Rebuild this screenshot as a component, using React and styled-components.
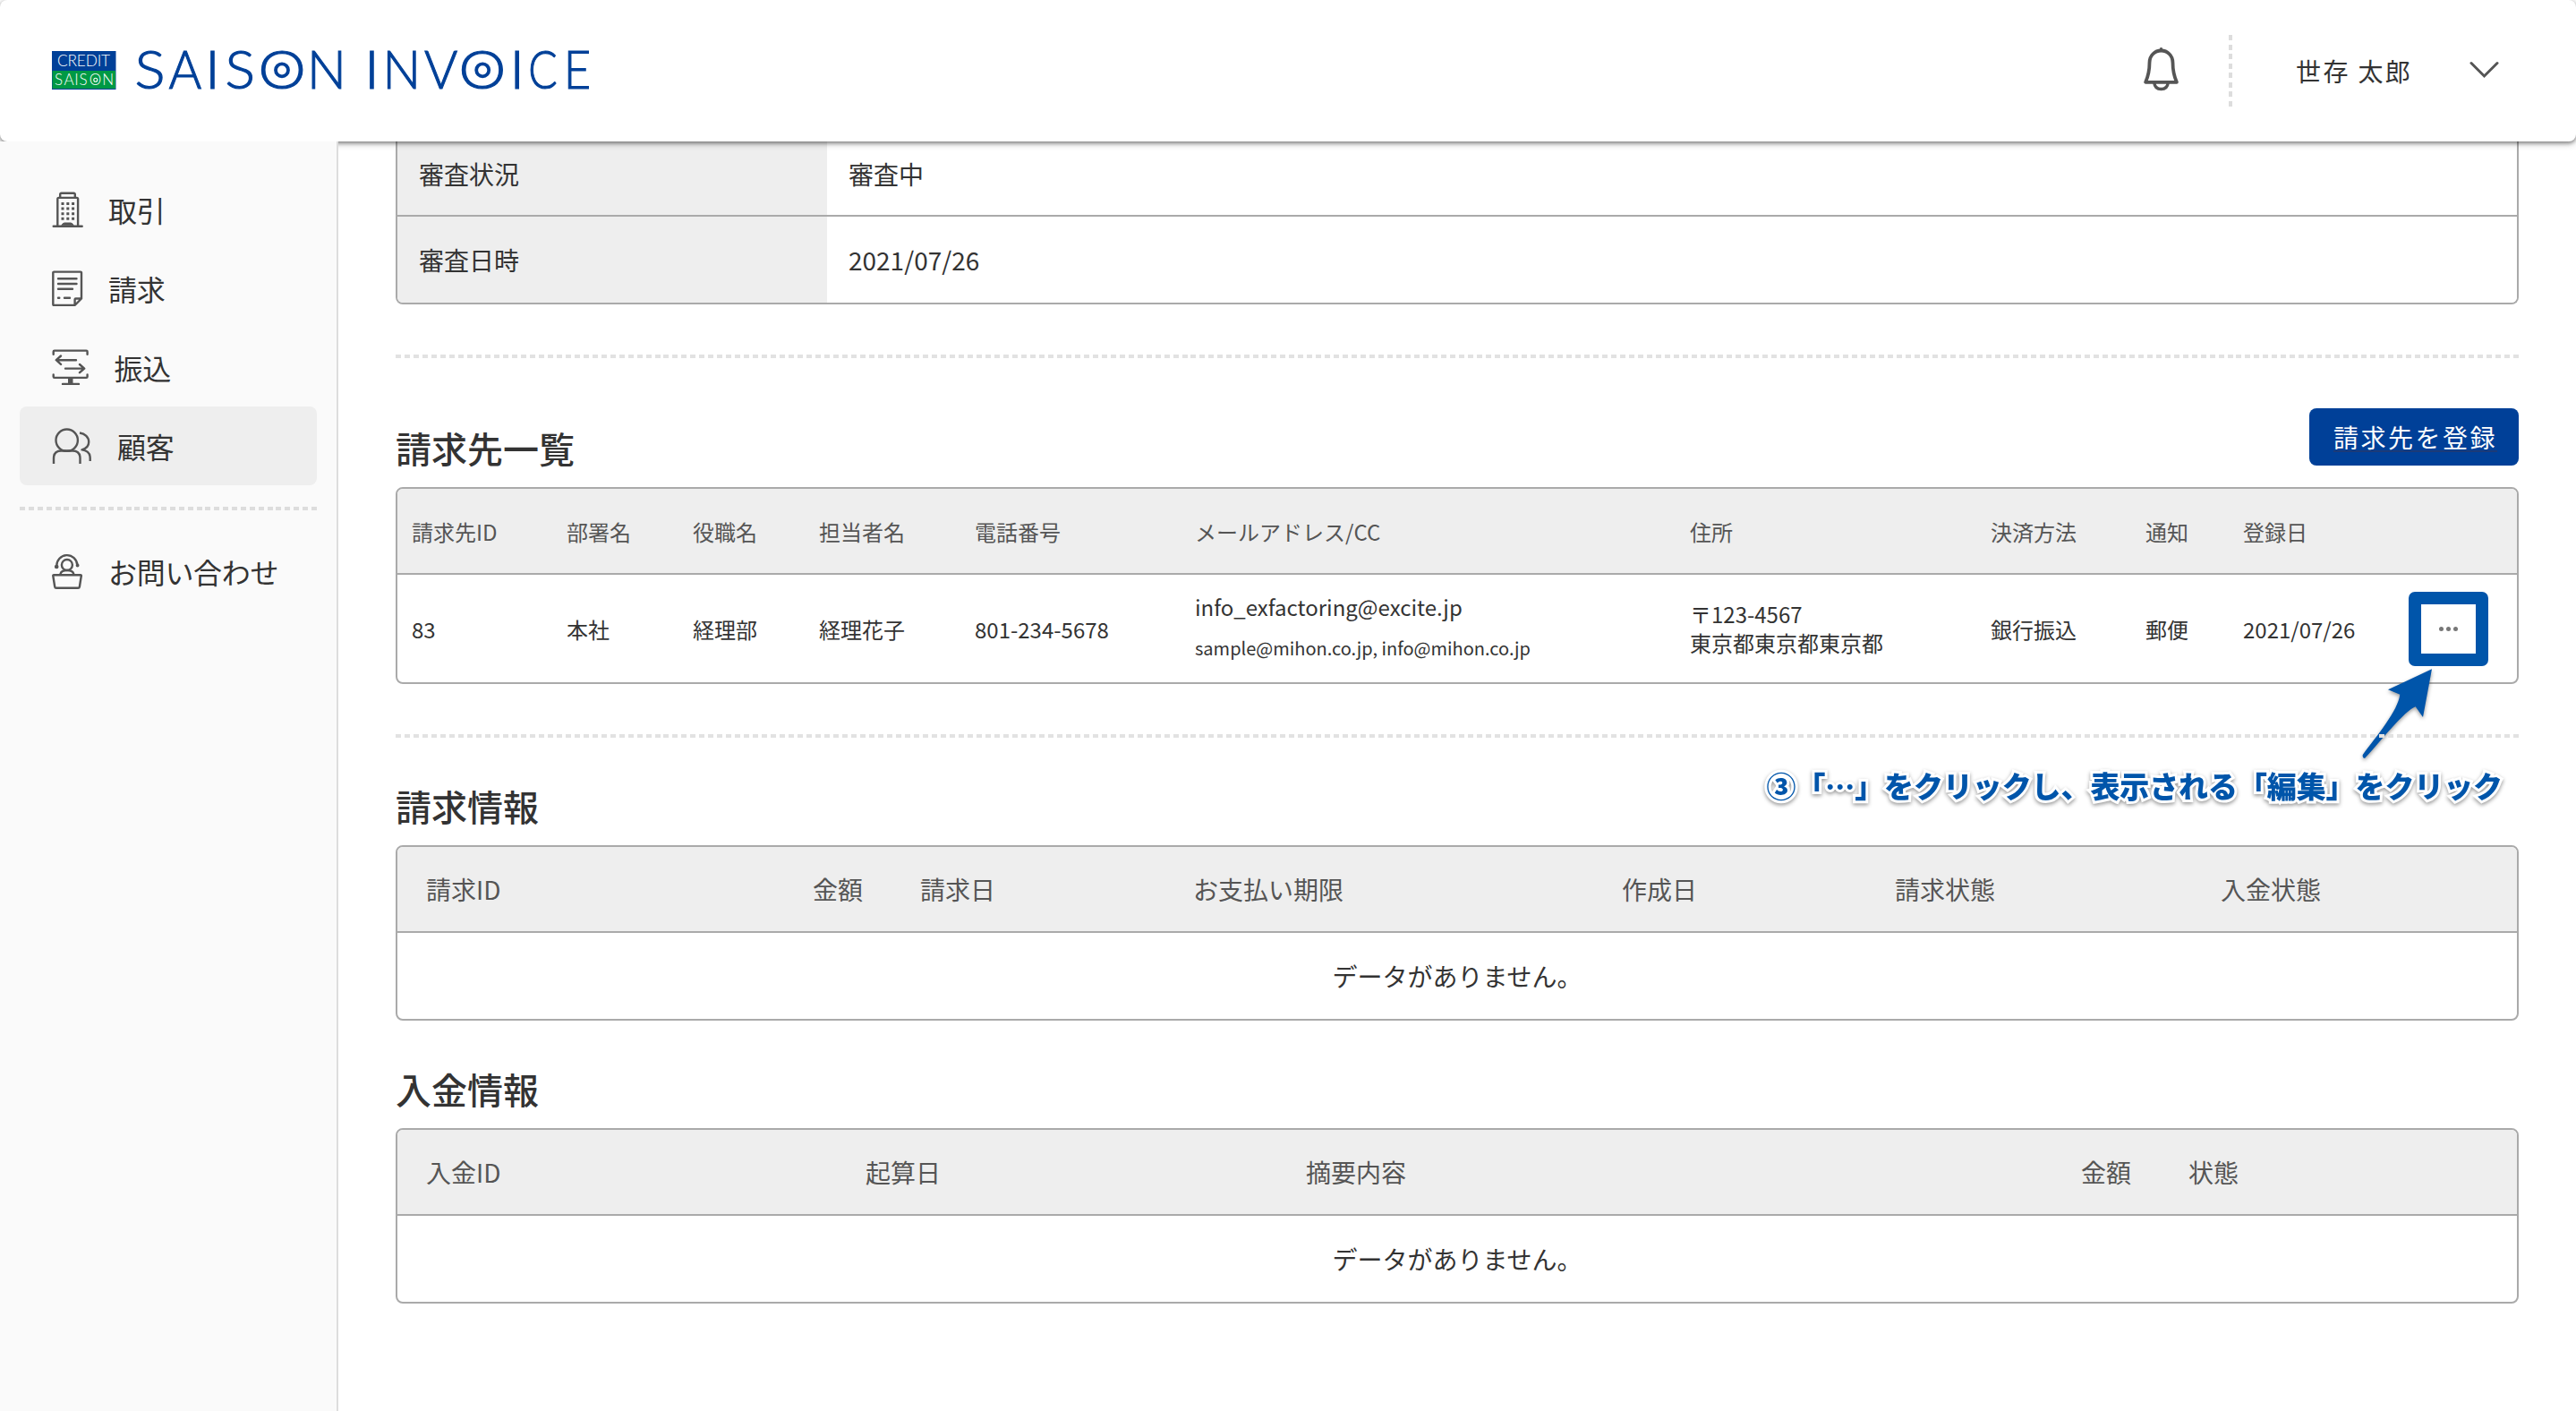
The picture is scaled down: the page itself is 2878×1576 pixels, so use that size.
import React from "react";
import styled, { createGlobalStyle } from "styled-components";

const GlobalStyle = createGlobalStyle`
  * { box-sizing: border-box; }
  html, body { margin: 0; padding: 0; background: #fff; }
  body {
    font-family: "Noto Sans CJK JP", "Noto Sans", sans-serif;
    color: #333;
    overflow: hidden;
  }
`;

const Page = styled.div`
  width: 2878px;
  height: 1576px;
  display: flex;
  flex-direction: column;
  overflow: hidden;
`;

const Header = styled.header`
  position: relative;
  z-index: 1;
  flex: none;
  height: 158px;
  padding: 0 86px 0 58px;
  display: flex;
  align-items: center;
  background: #fff;
  border-radius: 8px;
  box-shadow: 0 2px 4px rgba(0, 0, 0, 0.4), 0 2px 10px rgba(0, 0, 0, 0.22);
`;

const HeaderTools = styled.div`
  margin-left: auto;
  display: flex;
  align-items: center;
`;

const UserName = styled.span`
  width: 194px;
  margin-left: 71px;
  font-size: 28px;
  line-height: 40px;
  letter-spacing: 2.4px;
`;

const VerticalDash = styled.div`
  width: 4px;
  height: 80px;
  margin-left: 55px;
  background: repeating-linear-gradient(180deg, #ddd 0 6px, transparent 6px 10.571px);
`;

const HorizontalDash = styled.hr`
  width: 100%;
  height: 4px;
  margin: 0;
  border: 0;
  flex: none;
  background: repeating-linear-gradient(
    90deg,
    ${(p) => p.$color} 0 6px,
    transparent 6px ${(p) => p.$period}px
  );
`;

const Body = styled.div`
  flex: 1;
  min-height: 0;
  display: flex;
`;

const Sidebar = styled.nav`
  position: relative;
  z-index: 2;
  flex: none;
  width: 378px;
  padding: 32px 22px 0;
  background: #fafafa;
  border-right: 2px solid #ddd;
  display: flex;
  flex-direction: column;
`;

const NavGroup = styled.div`
  display: flex;
  flex-direction: column;
  padding: ${(p) => p.$pad || "0"};
`;

const NavItem = styled.a`
  height: 88px;
  padding-left: 36px;
  display: flex;
  align-items: center;
  gap: 28px;
  border-radius: 8px;
  background: ${(p) => (p.$active ? "#eee" : "transparent")};
  font-size: 32px;
  line-height: 48px;
  letter-spacing: -0.3px;
`;

const Main = styled.main`
  flex: 1;
  min-width: 0;
  padding: 0 64px;
  display: flex;
  flex-direction: column;
`;

const DetailTable = styled.div`
  display: grid;
  grid-template-rows: 82px 98px;
  border: 2px solid #aaa;
  border-top: 0;
  border-radius: 0 0 8px 8px;
  overflow: hidden;
  margin-bottom: 56px;
`;

const DetailRow = styled.div`
  display: grid;
  grid-template-columns: 480px 1fr;
  font-size: 28px;
  line-height: 42px;
  & + & { border-top: 2px solid #aaa; }
`;

const DetailCell = styled.div`
  display: flex;
  align-items: ${(p) => (p.$cut ? "flex-end" : "center")};
  padding: 0 24px ${(p) => (p.$cut ? "25px" : "0")};
  background: ${(p) => (p.$label ? "#eee" : "#fff")};
`;

const Section = styled.section`
  position: relative;
  padding-top: ${(p) => p.$top}px;
`;

const SectionHead = styled.div`
  display: flex;
  justify-content: space-between;
  align-items: flex-start;
  height: ${(p) => p.$height}px;
`;

const Title = styled.h2`
  margin: ${(p) => p.$offset || 0}px 0 0;
  font-size: 40px;
  line-height: 60px;
  font-weight: 500;
`;

const PrimaryButton = styled.a`
  width: 234px;
  height: 64px;
  display: flex;
  align-items: center;
  padding-left: 27px;
  border-radius: 8px;
  background: #004098;
  color: #fff;
  font-size: 28px;
  line-height: 42px;
  letter-spacing: 2.5px;
  white-space: nowrap;
  text-decoration: underline;
  text-decoration-color: #1b3a78;
  text-decoration-thickness: 2px;
  text-underline-offset: 3px;
`;

const Table = styled.div`
  border: 2px solid #aaa;
  border-radius: 8px;
  overflow: hidden;
  font-size: ${(p) => p.$size}px;
`;

const TableRow = styled.div`
  display: grid;
  grid-template-columns: ${(p) => p.$columns};
  align-items: center;
  height: ${(p) => p.$height}px;
  padding-left: ${(p) => p.$indent}px;
  white-space: nowrap;
`;

const TableHead = styled(TableRow)`
  background: #eee;
  color: #555;
  border-bottom: 2px solid #aaa;
`;

const Cell = styled.div`
  text-align: ${(p) => (p.$right ? "right" : "left")};
  padding-right: ${(p) => (p.$right ? 64 : 0)}px;
`;

const Stack = styled.div`
  display: flex;
  flex-direction: column;
`;

const Mail = styled.span`
  font-size: 24px;
  line-height: 43px;
`;

const MailCc = styled.span`
  font-size: 20px;
  line-height: 49px;
`;

const AddressLine = styled.span`
  line-height: 32px;
`;

const MoreButton = styled.div`
  display: flex;
  gap: 3px;
`;

const Dot = styled.i`
  width: 5px;
  height: 5px;
  border-radius: 50%;
  background: #777;
`;

const Empty = styled.div`
  height: 96px;
  display: flex;
  align-items: center;
  justify-content: center;
`;

const FocusFrame = styled.div`
  position: absolute;
  left: 2249px;
  top: 261px;
  width: 89px;
  height: 83px;
  border: 14px solid #0055aa;
  border-radius: 7px;
`;

const Arrow = styled.svg`
  position: absolute;
  left: 2188px;
  top: 340px;
  filter: drop-shadow(0 2px 2px rgba(0, 0, 0, 0.4));
`;

const Callout = styled.p`
  position: absolute;
  left: 1531.5px;
  top: 452px;
  margin: 0;
  font-size: 33px;
  line-height: 50px;
  font-weight: 900;
  letter-spacing: -0.1px;
  color: #0055aa;
  white-space: nowrap;
  -webkit-text-stroke: 6px #fff;
  paint-order: stroke fill;
  filter: drop-shadow(0 2px 2px rgba(0, 0, 0, 0.4));
`;

const LogoSvg = styled.svg`
  display: block;
  overflow: visible;
`;

const BellSvg = styled.svg`
  margin-bottom: 5px;
`;

const ChevronSvg = styled.svg`
  margin-bottom: 2px;
`;

// letter, left edge, horizontal stretch
const BRAND = [
  ["S", 153, 1.08], ["A", 188.7, 0.95], ["I", 235.5, 1.1], ["S", 254, 1.06], ["O", 292.3, 1.14], ["N", 348.6, 0.985],
  ["I", 413.4, 1.1], ["N", 433, 0.955], ["V", 474.7, 0.965], ["O", 516.3, 1.13], ["I", 575.6, 1.1], ["C", 593, 0.81], ["E", 635.2, 0.89],
];
const BEARING = { S: 2.4, A: 0.2, I: 5.9, O: 3.4, N: 5.8, V: 0.7, C: 3.4, E: 6.2 };

function Logo() {
  return (
    <LogoSvg width="620" height="60" viewBox="58 49 620 60">
      <rect x="58" y="57" width="71.5" height="43" fill="#004098" />
      <rect x="58.5" y="79" width="70.5" height="20" fill="#009944" />
      <g fontFamily="Lato, sans-serif" fontWeight="300" fill="#fff">
        <text x="64" y="74" fontSize="17.300" textLength="59" lengthAdjust="spacing">CREDIT</text>
        <text x="61 71.5 83.2 88.5 99.800 114.3" y="95.400" fontSize="17">SAISON</text>
      </g>
      <circle cx="106.800" cy="89.300" r="2" fill="none" stroke="#fff" strokeWidth="1.1" />
      <g fontFamily="Lato, sans-serif" fontWeight="300" fontSize="59" fill="#004098" stroke="#004098" strokeWidth="1.100">
        {BRAND.map(([ch, x, s], i) => (
          <text key={i} x={-BEARING[ch]} y="0" transform={`translate(${x} 99.400) scale(${s} 1)`}>{ch}</text>
        ))}
      </g>
      {[315, 539.2].map((cx) => (
        <circle key={cx} cx={cx} cy="78.3" r="7" fill="none" stroke="#004098" strokeWidth="3.8" />
      ))}
    </LogoSvg>
  );
}

function Icon({ w, children }) {
  return (
    <svg width={w} height="40" viewBox={`0 0 ${w} 40`} fill="none" stroke="#555" strokeWidth="2.4" strokeLinecap="round" strokeLinejoin="round">
      {children}
    </svg>
  );
}

const BuildingIcon = () => (
  <Icon w={35}>
    <path d="M9.2 6.5V3a1.3 1.3 0 0 1 1.3-1.3h14a1.3 1.3 0 0 1 1.3 1.3v3.5M6.3 38.5V8.2A1.3 1.3 0 0 1 7.6 6.9h20.2a1.3 1.3 0 0 1 1.3 1.3v30.3M1.7 38.7h32" />
    <path d="M11 37.5q1-2.5 3-2.500h7q2 0 3 2.500z" fill="#555" strokeWidth="1" />
    {[13.5, 19.1, 24.7, 30.3].map((y) => (
      <path key={y} d={`M10.500 ${y}h3M16.300 ${y}h3M22.100 ${y}h3`} strokeWidth="3" strokeLinecap="butt" />
    ))}
  </Icon>
);

const DocumentIcon = () => (
  <Icon w={35}>
    <path d="M2.3 1.6h29.700a1 1 0 0 1 1 1V31.500l-7.400 7.500H2.300a1 1 0 0 1-1-1V2.600a1 1 0 0 1 1-1zM25.600 38.700V32.500a1 1 0 0 1 1-1H32.700" />
    <path d="M7 9.200h20.500M7 15h20.500M7 20.700h16M7 30.700h1.300M14 30.700h6" />
  </Icon>
);

const TransferIcon = () => (
  <Icon w={41.5}>
    <path d="M1.700 5.800V2.800a1.200 1.200 0 0 1 1.200-1.200h35.500a1.200 1.200 0 0 1 1.200 1.200v3M1.700 28.500v2.200a1.200 1.200 0 0 0 1.200 1.200h35.500a1.200 1.200 0 0 0 1.200-1.200v-2.200M12 39h18M27 12.200H5M10 7.500l-5.200 4.700 5.200 4.700M15 21.600h21M31 17l5.200 4.600L31 26.200" />
    <path d="M18 32h5.500v7H18z" fill="#555" stroke="none" />
  </Icon>
);

const CustomersIcon = () => (
  <Icon w={45}>
    <g strokeLinecap="butt">
      <circle cx="16.700" cy="13.700" r="12.200" />
      <path d="M2 40V34Q2 25.500 10.500 25.500H23Q31.500 25.500 31.500 34v6M31 5.500c6 .8 10.200 5 10.200 10.300 0 4-3 7.300-7.700 8.600 6 .6 9.200 4.200 9.200 9.600v3" />
    </g>
  </Icon>
);

const SupportIcon = () => (
  <Icon w={35}>
    <circle cx="16.900" cy="13" r="6" />
    <path d="M5.300 14.500A11.500 11.700 0 0 1 28.400 13.300M9.500 23q1-4 7.400-4t7.400 4M2.100 24.300h29.900q1 0 .8 1l-1.900 12q-.2 1.500-1.800 1.500H5q-1.600 0-1.800-1.500L1.300 25.300q-.2-1 .8-1z" />
    <circle cx="5.200" cy="15" r="1.600" fill="#555" strokeWidth="1.500" />
    <circle cx="28.600" cy="13.500" r="1.200" fill="#555" strokeWidth="1.500" />
  </Icon>
);

const BellIcon = () => (
  <BellSvg width="41" height="50" viewBox="0 0 41 50" fill="none" stroke="#555" strokeWidth="3.800" strokeLinejoin="round">
    <path d="M20.500 4.500c-7 0-13 5.500-13 13.500 0 8-.8 13.500-4.400 21.800h34.800C34.300 31.500 33.500 26 33.500 18c0-8-6-13.500-13-13.500z" />
    <path d="M12.800 40.500c.5 4.700 3.700 7 7.700 7s7.200-2.300 7.700-7" strokeWidth="3.400" />
    <circle cx="20.500" cy="2.800" r="1" fill="#555" strokeWidth="1.500" />
  </BellSvg>
);

const ChevronIcon = () => (
  <ChevronSvg width="33" height="22" viewBox="0 0 33 22" fill="none" stroke="#555" strokeWidth="3" strokeLinecap="round">
    <path d="M2 3.500l14.500 14.500L31 3.500" />
  </ChevronSvg>
);

const NAV = [
  ["取引", BuildingIcon],
  ["請求", DocumentIcon],
  ["振込", TransferIcon],
  ["顧客", CustomersIcon],
];

const CLIENT_COLUMNS = "173px 141px 141px 174px 246px 553px 336px 173px 109px 219px 1fr";
const CLIENT_HEADERS = ["請求先ID", "部署名", "役職名", "担当者名", "電話番号", "メールアドレス/CC", "住所", "決済方法", "通知", "登録日", ""];

function EmptyTable({ columns, headers, rightIndex }) {
  return (
    <Table $size={28}>
      <TableHead $columns={columns} $height={96} $indent={32}>
        {headers.map((h, i) => (
          <Cell key={h} $right={i === rightIndex}>{h}</Cell>
        ))}
      </TableHead>
      <Empty>データがありません。</Empty>
    </Table>
  );
}

export default function App() {
  return (
    <Page>
      <GlobalStyle />
      <Header>
        <Logo />
        <HeaderTools>
          <BellIcon />
          <VerticalDash />
          <UserName>世存 太郎</UserName>
          <ChevronIcon />
        </HeaderTools>
      </Header>
      <Body>
        <Sidebar>
          <NavGroup $pad="0 0 24px">
            {NAV.map(([label, Glyph]) => (
              <NavItem key={label} $active={label === "顧客"}>
                <Glyph />
                {label}
              </NavItem>
            ))}
          </NavGroup>
          <HorizontalDash $color="#ddd" $period={9.879} />
          <NavGroup $pad="24px 0 0">
            <NavItem>
              <SupportIcon />
              お問い合わせ
            </NavItem>
          </NavGroup>
        </Sidebar>
        <Main>
          <DetailTable>
            <DetailRow>
              <DetailCell $label $cut>審査状況</DetailCell>
              <DetailCell $cut>審査中</DetailCell>
            </DetailRow>
            <DetailRow>
              <DetailCell $label>審査日時</DetailCell>
              <DetailCell>2021/07/26</DetailCell>
            </DetailRow>
          </DetailTable>
          <HorizontalDash $color="#e2e2e2" $period={9.983} />

          <Section $top={56}>
            <SectionHead $height={88}>
              <Title $offset={14}>請求先一覧</Title>
              <PrimaryButton>請求先を登録</PrimaryButton>
            </SectionHead>
            <Table $size={24}>
              <TableHead $columns={CLIENT_COLUMNS} $height={96} $indent={16}>
                {CLIENT_HEADERS.map((h, i) => (
                  <Cell key={i}>{h}</Cell>
                ))}
              </TableHead>
              <TableRow $columns={CLIENT_COLUMNS} $height={120} $indent={16}>
                <Cell>83</Cell>
                <Cell>本社</Cell>
                <Cell>経理部</Cell>
                <Cell>経理花子</Cell>
                <Cell>801-234-5678</Cell>
                <Stack>
                  <Mail>info_exfactoring@excite.jp</Mail>
                  <MailCc>sample@mihon.co.jp, info@mihon.co.jp</MailCc>
                </Stack>
                <Stack>
                  <AddressLine>〒123-4567</AddressLine>
                  <AddressLine>東京都東京都東京都</AddressLine>
                </Stack>
                <Cell>銀行振込</Cell>
                <Cell>郵便</Cell>
                <Cell>2021/07/26</Cell>
                <MoreButton>
                  <Dot />
                  <Dot />
                  <Dot />
                </MoreButton>
              </TableRow>
            </Table>
            <FocusFrame />
            <Arrow width="100" height="120" viewBox="2630 740 100 120">
              <path
                d="M2717 747.300L2668 770.300L2681.300 775.700C2679 794 2656 821 2639.800 843Q2639 847 2642 847C2660 828 2686 794 2698.700 789.300L2707 801Z"
                fill="#0055aa"
              />
            </Arrow>
            <Callout>③「…」をクリックし、表示される「編集」をクリック</Callout>
          </Section>

          <Section $top={56}>
            <HorizontalDash $color="#e2e2e2" $period={9.983} />
          </Section>

          <Section $top={46}>
            <SectionHead $height={74}>
              <Title>請求情報</Title>
            </SectionHead>
            <EmptyTable
              columns="422px 130px 305px 479px 305px 364px 1fr"
              rightIndex={1}
              headers={["請求ID", "金額", "請求日", "お支払い期限", "作成日", "請求状態", "入金状態"]}
            />
          </Section>

          <Section $top={46}>
            <SectionHead $height={74}>
              <Title>入金情報</Title>
            </SectionHead>
            <EmptyTable
              columns="491px 492px 842px 144px 1fr"
              rightIndex={3}
              headers={["入金ID", "起算日", "摘要内容", "金額", "状態"]}
            />
          </Section>
        </Main>
      </Body>
    </Page>
  );
}
